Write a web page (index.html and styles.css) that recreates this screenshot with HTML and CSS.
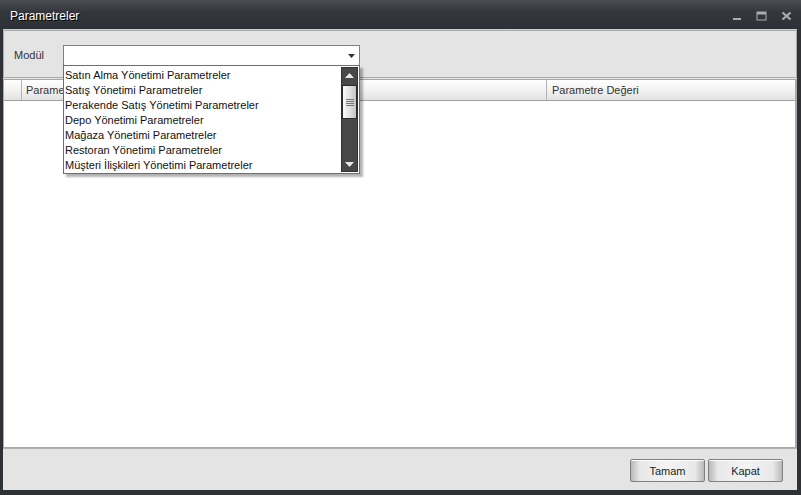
FILE: index.html
```html
<!DOCTYPE html>
<html lang="tr">
<head>
    <meta charset="UTF-8">
    <title>Parametreler</title>
    <link rel="stylesheet" href="styles.css">
</head>
<body>
    <div class="window">
        <div class="titlebar">
            <span class="title">Parametreler</span>
            <div class="win-buttons">
                <svg class="win-btn" width="10" height="10" viewBox="0 0 10 10"><rect x="1" y="7" width="8" height="2" fill="#a9aeb4"/></svg>
                <svg class="win-btn" width="11" height="10" viewBox="0 0 11 10"><rect x="1" y="1" width="9" height="8" fill="none" stroke="#a9aeb4" stroke-width="1"/><rect x="1" y="1" width="9" height="2.5" fill="#a9aeb4"/></svg>
                <svg class="win-btn" width="11" height="10" viewBox="0 0 11 10"><path d="M1.5 1.5 L9.5 8.5 M9.5 1.5 L1.5 8.5" stroke="#a9aeb4" stroke-width="2.2"/></svg>
            </div>
        </div>

        <div class="client">
            <div class="filter-panel">
                <label class="field-label">Modül</label>
                <div class="combo">
                    <div class="combo-box">
                        <svg class="combo-arrow" width="7" height="4" viewBox="0 0 7 4"><path d="M0 0 H7 L3.5 4 Z" fill="#333"/></svg>
                    </div>
                    <div class="combo-popup">
                        <ul class="combo-list">
                            <li>Satın Alma Yönetimi Parametreler</li>
                            <li>Satış Yönetimi Parametreler</li>
                            <li>Perakende Satış Yönetimi Parametreler</li>
                            <li>Depo Yönetimi Parametreler</li>
                            <li>Mağaza Yönetimi Parametreler</li>
                            <li>Restoran Yönetimi Parametreler</li>
                            <li>Müşteri İlişkileri Yönetimi Parametreler</li>
                        </ul>
                        <div class="scrollbar">
                            <div class="scroll-btn">
                                <svg width="9" height="5" viewBox="0 0 9 5"><path d="M0 5 L4.5 0 L9 5 Z" fill="#e8e8e8"/></svg>
                            </div>
                            <div class="scroll-track">
                                <div class="scroll-thumb">
                                    <span></span><span></span><span></span><span></span>
                                </div>
                            </div>
                            <div class="scroll-btn">
                                <svg width="9" height="5" viewBox="0 0 9 5"><path d="M0 0 L9 0 L4.5 5 Z" fill="#e8e8e8"/></svg>
                            </div>
                        </div>
                    </div>
                </div>
            </div>

            <div class="grid">
                <div class="grid-header">
                    <div class="col-indicator"></div>
                    <div class="col col-name">Parame</div>
                    <div class="col col-value">Parametre Değeri</div>
                </div>
                <div class="grid-body"></div>
            </div>

            <div class="footer">
                <button class="btn">Tamam</button>
                <button class="btn">Kapat</button>
            </div>
        </div>
    </div>
</body>
</html>
```

FILE: styles.css
```css
* {
    margin: 0;
    padding: 0;
    box-sizing: border-box;
}

body {
    background: #2e3237;
    font-family: "Liberation Sans", Arial, sans-serif;
    font-size: 11px;
    color: #1e1e1e;
}

.window {
    height: 495px;
    display: flex;
    flex-direction: column;
}

.titlebar {
    height: 29px;
    display: flex;
    align-items: center;
    justify-content: space-between;
    padding: 0 10px;
    background: linear-gradient(#4b4e53, #34373c 40%, #2d3035);
}

.title {
    color: #fff;
    font-size: 12px;
    text-shadow: 1px 1px 0 #000;
    margin-top: 2px;
}

.win-buttons {
    display: flex;
    gap: 14px;
    margin-top: 2px;
    margin-right: -1px;
}

.client {
    flex: 1;
    margin: 0 4px 5px 3px;
    background: #e4e4e4;
    display: flex;
    flex-direction: column;
    border-top: 1px solid #d0d0d0;
}

.filter-panel {
    height: 48px;
    border: 1px solid #a8a8a8;
    display: flex;
    align-items: flex-start;
    padding: 14px 0 0 10px;
    position: relative;
    z-index: 2;
}

.field-label {
    width: 49px;
    line-height: 21px;
    color: #333;
}

.combo {
    position: relative;
    width: 297px;
}

.combo-box {
    height: 21px;
    background: #fff;
    border: 1px solid #808080;
    display: flex;
    align-items: center;
    justify-content: flex-end;
    padding-right: 4px;
}

.combo-popup {
    position: absolute;
    top: 20px;
    left: 0;
    width: 297px;
    height: 109px;
    background: #fff;
    border: 1px solid #6e6e6e;
    box-shadow: 3px 3px 2px rgba(0, 0, 0, 0.3);
    display: flex;
    padding: 1px;
}

.combo-list {
    list-style: none;
    flex: 1;
    padding-top: 1px;
}

.combo-list li {
    height: 15px;
    line-height: 15px;
    white-space: nowrap;
    color: #111;
}

.scrollbar {
    width: 17px;
    background: #484848;
    border: 1px solid #333;
    display: flex;
    flex-direction: column;
}

.scroll-btn {
    height: 14px;
    display: flex;
    align-items: center;
    justify-content: center;
}

.scroll-track {
    flex: 1;
    padding-top: 3px;
}

.scroll-thumb {
    height: 34px;
    background: linear-gradient(90deg, #fafafa, #e2e2e2 50%, #c4c4c4);
    border: 1px solid #2a2a2a;
    display: flex;
    flex-direction: column;
    align-items: center;
    justify-content: center;
    gap: 1px;
}

.scroll-thumb span {
    width: 8px;
    height: 1px;
    background: #777;
}

.grid {
    flex: 1;
    margin-top: 1px;
    border: 1px solid #a8a8a8;
    border-right-width: 2px;
    background: #fff;
    display: flex;
    flex-direction: column;
}

.grid-header {
    height: 21px;
    display: flex;
    background: linear-gradient(#ffffff, #f2f2f2 50%, #e2e2e2);
    border-bottom: 1px solid #a0a0a0;
}

.col-indicator {
    width: 18px;
    border-right: 1px solid #b4b4b4;
}

.col {
    line-height: 20px;
    padding-left: 4px;
    color: #333;
}

.col-name {
    width: 525px;
    border-right: 1px solid #b4b4b4;
}

.col-value {
    flex: 1;
    padding-left: 5px;
}

.grid-body {
    flex: 1;
}

.footer {
    height: 42px;
    border-top: 1px solid #b0b0b0;
    display: flex;
    justify-content: flex-end;
    align-items: flex-start;
    gap: 3px;
    padding: 10px 14px 0 0;
}

.btn {
    width: 75px;
    height: 23px;
    font-family: "Liberation Sans", Arial, sans-serif;
    font-size: 11px;
    color: #1e1e1e;
    border: 1px solid #808080;
    border-radius: 2px;
    background: linear-gradient(90deg, #b8b8b8, #e8e8e8 12%, #f4f4f4 50%, #e8e8e8 88%, #b8b8b8);
    box-shadow: inset 0 1px 0 #fff;
}
```
